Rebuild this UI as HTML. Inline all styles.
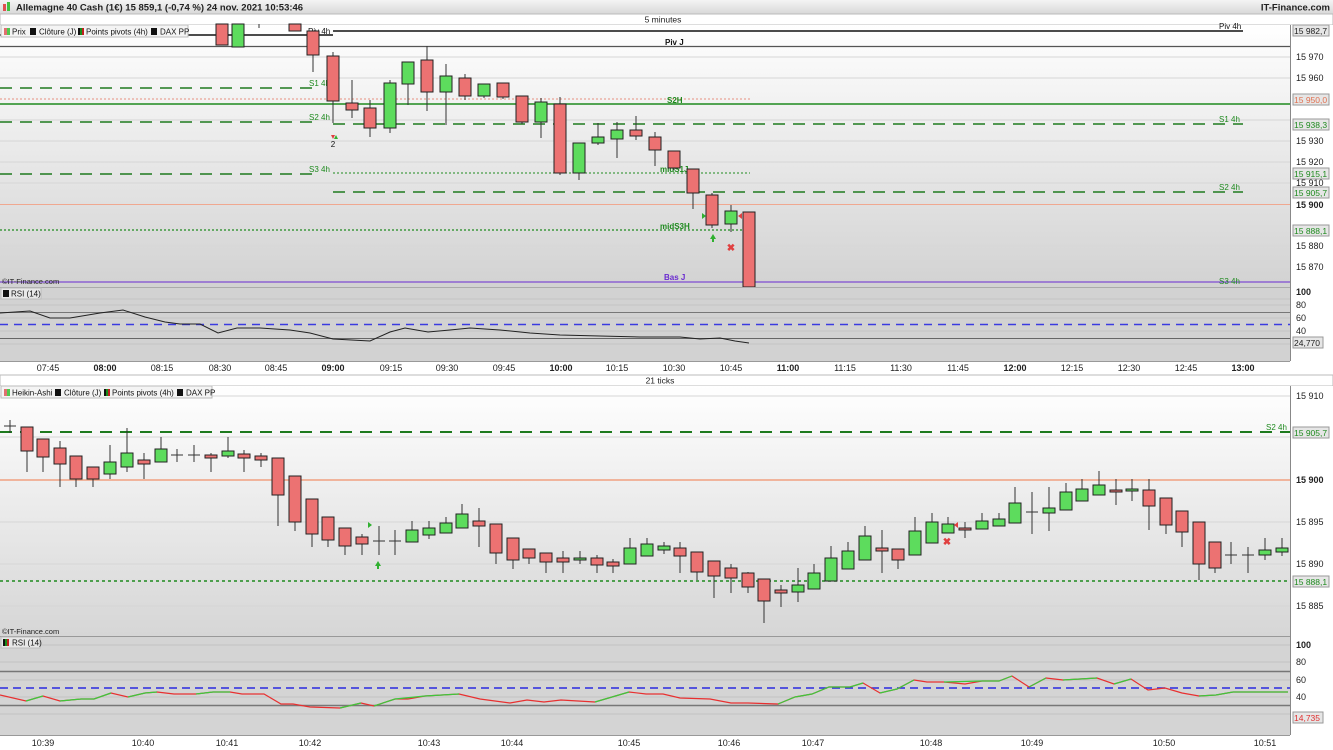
<!DOCTYPE html>
<html><head><meta charset="utf-8"><style>
html,body{margin:0;padding:0;width:1333px;height:750px;overflow:hidden;background:#fff;font-family:"Liberation Sans",sans-serif}
svg{display:block}
text{font-family:"Liberation Sans",sans-serif}
.r{fill:#ec7272;stroke:#222;stroke-width:1}
.g{fill:#5ddc5d;stroke:#222;stroke-width:1}
.w{stroke:#333;stroke-width:1}
.grid{stroke:#d6d6d6;stroke-width:1}
.ax{font-size:9px;fill:#222}
.lab{font-size:8px;fill:#1e8a1e}
</style></head><body>
<svg width="1333" height="750" viewBox="0 0 1333 750" xmlns="http://www.w3.org/2000/svg">
<defs>
<linearGradient id="tb" x1="0" y1="0" x2="0" y2="1"><stop offset="0" stop-color="#f4f4f4"/><stop offset="1" stop-color="#d8d8d8"/></linearGradient>
<linearGradient id="bg1" x1="0" y1="0" x2="0" y2="1"><stop offset="0" stop-color="#ffffff"/><stop offset="1" stop-color="#d2d2d2"/></linearGradient>
<linearGradient id="bg2" x1="0" y1="0" x2="0" y2="1"><stop offset="0" stop-color="#ffffff"/><stop offset="1" stop-color="#d6d6d6"/></linearGradient>
</defs>
<!-- title bar -->
<rect x="0" y="0" width="1333" height="14" fill="url(#tb)"/>
<rect x="3" y="4" width="3" height="7" fill="#e05050"/><rect x="7" y="2" width="3" height="9" fill="#40c040"/>
<text x="16" y="10.5" font-size="9.5" font-weight="bold" fill="#222">Allemagne 40 Cash (1€) 15 859,1 (-0,74 %) 24 nov. 2021 10:53:46</text>
<text x="1330" y="10.5" font-size="9.5" font-weight="bold" fill="#222" text-anchor="end">IT-Finance.com</text>
<rect x="0" y="14" width="1333" height="11" fill="#fff" stroke="#bbb"/>
<text x="663" y="22.5" font-size="8.5" fill="#222" text-anchor="middle">5 minutes</text>

<!-- top chart -->
<rect x="0" y="25" width="1290" height="262" fill="url(#bg1)"/>
<g class="grid">
<line x1="0" x2="1290" y1="57" y2="57"/><line x1="0" x2="1290" y1="78" y2="78"/><line x1="0" x2="1290" y1="120" y2="120"/><line x1="0" x2="1290" y1="141" y2="141"/><line x1="0" x2="1290" y1="162" y2="162"/><line x1="0" x2="1290" y1="183" y2="183"/><line x1="0" x2="1290" y1="246" y2="246"/><line x1="0" x2="1290" y1="267" y2="267"/>
</g>
<line x1="0" x2="1290" y1="46.5" y2="46.5" stroke="#555" stroke-width="1.2"/>
<line x1="0" x2="333" y1="35" y2="35" stroke="#111" stroke-width="1.5"/>
<line x1="333" x2="1243" y1="31" y2="31" stroke="#111" stroke-width="1.5"/>
<line x1="0" x2="750" y1="99" y2="99" stroke="#e89080" stroke-width="1" stroke-dasharray="2,2"/>
<line x1="0" x2="1290" y1="104" y2="104" stroke="#1e8a1e" stroke-width="1.5"/>
<line x1="0" x2="315" y1="88" y2="88" stroke="#1e7a1e" stroke-width="1.5" stroke-dasharray="12,8"/>
<line x1="0" x2="315" y1="122" y2="122" stroke="#1e7a1e" stroke-width="1.5" stroke-dasharray="12,8"/>
<line x1="0" x2="315" y1="174" y2="174" stroke="#1e7a1e" stroke-width="1.5" stroke-dasharray="12,8"/>
<line x1="333" x2="1243" y1="124" y2="124" stroke="#1e7a1e" stroke-width="1.5" stroke-dasharray="12,8"/>
<line x1="333" x2="1243" y1="192" y2="192" stroke="#1e7a1e" stroke-width="1.5" stroke-dasharray="12,8"/>
<line x1="333" x2="750" y1="173" y2="173" stroke="#1e8a1e" stroke-width="1" stroke-dasharray="2,2"/>
<line x1="0" x2="750" y1="230" y2="230" stroke="#1e8a1e" stroke-width="1.2" stroke-dasharray="2,2"/>
<line x1="0" x2="1290" y1="204.5" y2="204.5" stroke="#f0a890" stroke-width="1"/>
<line x1="0" x2="1290" y1="282" y2="282" stroke="#6a2ad0" stroke-width="1"/>
<text x="308" y="34" font-size="8" fill="#111">Piv 4h</text>
<text x="1219" y="29" font-size="8" fill="#111">Piv 4h</text>
<text x="665" y="45" font-size="8" font-weight="bold" fill="#111">Piv J</text>
<text x="309" y="86" class="lab">S1 4h</text>
<text x="309" y="120" class="lab">S2 4h</text>
<text x="309" y="172" class="lab">S3 4h</text>
<text x="1219" y="122" class="lab">S1 4h</text>
<text x="1219" y="190" class="lab">S2 4h</text>
<text x="1219" y="284" class="lab">S3 4h</text>
<text x="667" y="103" font-size="8" font-weight="bold" fill="#1e8a1e">S2H</text>
<text x="660" y="172" font-size="8" font-weight="bold" fill="#1e8a1e">midS1J</text>
<text x="660" y="229" font-size="8" font-weight="bold" fill="#1e8a1e">midS3H</text>
<text x="664" y="280" font-size="8" font-weight="bold" fill="#6a2ad0">Bas J</text>
<!-- top candles -->
<g>
<rect class="r" x="216" y="24" width="12" height="21"/>
<rect class="g" x="232" y="24" width="12" height="23"/>
<line class="w" x1="259" x2="259" y1="24" y2="28"/>
<rect class="r" x="289" y="24" width="12" height="7"/>
<line class="w" x1="313" x2="313" y1="31" y2="72"/><rect class="r" x="307" y="31" width="12" height="24"/>
<line class="w" x1="333" x2="333" y1="52" y2="123"/><rect class="r" x="327" y="56" width="12" height="45"/>
<line class="w" x1="352" x2="352" y1="80" y2="118"/><rect class="r" x="346" y="103" width="12" height="7"/>
<line class="w" x1="370" x2="370" y1="100" y2="137"/><rect class="r" x="364" y="108" width="12" height="20"/>
<line class="w" x1="390" x2="390" y1="80" y2="133"/><rect class="g" x="384" y="83" width="12" height="45"/>
<line class="w" x1="408" x2="408" y1="62" y2="105"/><rect class="g" x="402" y="62" width="12" height="22"/>
<line class="w" x1="427" x2="427" y1="46" y2="111"/><rect class="r" x="421" y="60" width="12" height="32"/>
<line class="w" x1="446" x2="446" y1="64" y2="125"/><rect class="g" x="440" y="76" width="12" height="16"/>
<line class="w" x1="465" x2="465" y1="74" y2="100"/><rect class="r" x="459" y="78" width="12" height="18"/>
<line class="w" x1="484" x2="484" y1="84" y2="98"/><rect class="g" x="478" y="84" width="12" height="12"/>
<line class="w" x1="503" x2="503" y1="83" y2="99"/><rect class="r" x="497" y="83" width="12" height="14"/>
<line class="w" x1="522" x2="522" y1="96" y2="124"/><rect class="r" x="516" y="96" width="12" height="26"/>
<line class="w" x1="541" x2="541" y1="98" y2="138"/><rect class="g" x="535" y="102" width="12" height="20"/>
<line class="w" x1="560" x2="560" y1="97" y2="175"/><rect class="r" x="554" y="104" width="12" height="69"/>
<line class="w" x1="579" x2="579" y1="143" y2="180"/><rect class="g" x="573" y="143" width="12" height="30"/>
<line class="w" x1="598" x2="598" y1="123" y2="145"/><rect class="g" x="592" y="137" width="12" height="6"/>
<line class="w" x1="617" x2="617" y1="122" y2="158"/><rect class="g" x="611" y="130" width="12" height="9"/>
<line class="w" x1="636" x2="636" y1="116" y2="140"/><rect class="r" x="630" y="130" width="12" height="6"/>
<line class="w" x1="655" x2="655" y1="132" y2="166"/><rect class="r" x="649" y="137" width="12" height="13"/>
<line class="w" x1="674" x2="674" y1="151" y2="170"/><rect class="r" x="668" y="151" width="12" height="17"/>
<line class="w" x1="693" x2="693" y1="169" y2="209"/><rect class="r" x="687" y="169" width="12" height="24"/>
<line class="w" x1="712" x2="712" y1="193" y2="228"/><rect class="r" x="706" y="195" width="12" height="30"/>
<line class="w" x1="731" x2="731" y1="205" y2="232"/><rect class="g" x="725" y="211" width="12" height="13"/>
<rect class="r" x="743" y="212" width="12" height="75"/>
</g>
<path d="M710 239 l3 -5 l3 5 h-2 v3 h-2 v-3z" fill="#30b030"/>
<text x="731" y="251" font-size="10" font-weight="bold" fill="#e04040" text-anchor="middle">✖</text>
<text x="333" y="147" font-size="8" fill="#111" text-anchor="middle">2</text>
<path d="M331 135 l2 4 l2 -4z" fill="#e04040"/><path d="M334 139 l2 -4 l2 4z" fill="#30b030"/>
<path d="M702 213 l4 3 l-4 3z" fill="#30b030"/><path d="M742 213 l-4 3 l4 3z" fill="#e04040"/>
<!-- legend top -->
<rect x="1" y="25" width="187" height="12" fill="#f4f4f4" stroke="#bbb"/>
<rect x="4" y="28" width="3" height="7" fill="#e07070"/><rect x="7" y="28" width="3" height="7" fill="#50c850"/>
<text x="12" y="34.5" font-size="8" fill="#111">Prix</text>
<rect x="30" y="28" width="6" height="7" fill="#111"/><text x="39" y="34.5" font-size="8" fill="#111">Clôture (J)</text>
<rect x="78" y="28" width="2" height="7" fill="#111"/><rect x="80" y="28" width="2" height="7" fill="#1a8a1a"/><rect x="82" y="28" width="2" height="7" fill="#c02020"/>
<text x="86" y="34.5" font-size="8" fill="#111">Points pivots (4h)</text>
<rect x="151" y="28" width="6" height="7" fill="#111"/><text x="160" y="34.5" font-size="8" fill="#111">DAX PP</text>
<text x="2" y="284" font-size="7.5" fill="#222">©IT-Finance.com</text>
<!-- top RSI -->
<rect x="0" y="287" width="1290" height="74" fill="#d2d2d2"/>
<line x1="0" x2="1290" y1="287.5" y2="287.5" stroke="#aaa"/>
<g stroke="#c4c4c4"><line x1="0" x2="1290" y1="299" y2="299"/><line x1="0" x2="1290" y1="305" y2="305"/><line x1="0" x2="1290" y1="318" y2="318"/><line x1="0" x2="1290" y1="331" y2="331"/><line x1="0" x2="1290" y1="344" y2="344"/></g>
<line x1="0" x2="1290" y1="312.5" y2="312.5" stroke="#777"/>
<line x1="0" x2="1290" y1="338.5" y2="338.5" stroke="#666"/>
<line x1="0" x2="1290" y1="324.5" y2="324.5" stroke="#3b3be0" stroke-width="1.5" stroke-dasharray="8,6"/>
<polyline fill="none" stroke="#222" stroke-width="1" points="0,313 30,311 50,318 70,318 100,313 123,310 145,317 165,322 180,324 200,324 218,333 237,328 260,328 290,330 310,333 333,339 370,341 390,332 405,328 428,332 450,330 470,328 500,330 530,333 560,335 600,336 640,337 680,337 700,339 720,338 735,341 749,343"/>
<rect x="1" y="288" width="40" height="11" fill="#e8e8e8" stroke="#bbb"/>
<rect x="3" y="290" width="6" height="7" fill="#111"/><text x="11" y="296.5" font-size="8" fill="#111">RSI (14)</text>
<!-- top right axis -->
<rect x="1290" y="25" width="43" height="336" fill="#fff"/>
<line x1="1290.5" x2="1290.5" y1="25" y2="361" stroke="#888"/>
<g class="ax">
<text x="1296" y="60">15 970</text><text x="1296" y="81">15 960</text><text x="1296" y="144">15 930</text><text x="1296" y="165">15 920</text><text x="1296" y="186">15 910</text><text x="1296" y="208" font-weight="bold">15 900</text><text x="1296" y="249">15 880</text><text x="1296" y="270">15 870</text>
<text x="1296" y="295" font-weight="bold">100</text><text x="1296" y="308">80</text><text x="1296" y="321">60</text><text x="1296" y="334">40</text>
</g>
<g font-size="8.5">
<rect x="1293" y="25" width="36" height="11" fill="#e6e6e6" stroke="#999"/><text x="1294" y="34" fill="#222">15 982,7</text>
<rect x="1293" y="94" width="36" height="11" fill="#e6e6e6" stroke="#999"/><text x="1294" y="103" fill="#e07050">15 950,0</text>
<rect x="1293" y="119" width="36" height="11" fill="#e6e6e6" stroke="#999"/><text x="1294" y="128" fill="#1e8a1e">15 938,3</text>
<rect x="1293" y="168" width="36" height="11" fill="#e6e6e6" stroke="#999"/><text x="1294" y="177" fill="#1e8a1e">15 915,1</text>
<rect x="1293" y="187" width="36" height="11" fill="#e6e6e6" stroke="#999"/><text x="1294" y="196" fill="#1e8a1e">15 905,7</text>
<rect x="1293" y="225" width="36" height="11" fill="#e6e6e6" stroke="#999"/><text x="1294" y="234" fill="#1e8a1e">15 888,1</text>
<rect x="1293" y="337" width="30" height="11" fill="#e6e6e6" stroke="#999"/><text x="1294" y="346" fill="#222">24,770</text>
</g>
<!-- top time axis -->
<rect x="0" y="361" width="1333" height="14" fill="#fff"/>
<line x1="0" x2="1290" y1="361.5" y2="361.5" stroke="#999"/>
<g class="ax" font-size="8.5" text-anchor="middle">
<text x="48" y="371">07:45</text><text x="105" y="371" font-weight="bold">08:00</text><text x="162" y="371">08:15</text><text x="220" y="371">08:30</text><text x="276" y="371">08:45</text><text x="333" y="371" font-weight="bold">09:00</text><text x="391" y="371">09:15</text><text x="447" y="371">09:30</text><text x="504" y="371">09:45</text><text x="561" y="371" font-weight="bold">10:00</text><text x="617" y="371">10:15</text><text x="674" y="371">10:30</text><text x="731" y="371">10:45</text><text x="788" y="371" font-weight="bold">11:00</text><text x="845" y="371">11:15</text><text x="901" y="371">11:30</text><text x="958" y="371">11:45</text><text x="1015" y="371" font-weight="bold">12:00</text><text x="1072" y="371">12:15</text><text x="1129" y="371">12:30</text><text x="1186" y="371">12:45</text><text x="1243" y="371" font-weight="bold">13:00</text>
</g>
<!-- 21 ticks bar -->
<rect x="0" y="375" width="1333" height="11" fill="#fff" stroke="#bbb"/>
<text x="660" y="383.5" font-size="8.5" fill="#222" text-anchor="middle">21 ticks</text>

<!-- bottom chart -->
<rect x="0" y="386" width="1290" height="250" fill="url(#bg2)"/>
<g class="grid"><line x1="0" x2="1290" y1="396" y2="396"/><line x1="0" x2="1290" y1="437" y2="437"/><line x1="0" x2="1290" y1="522" y2="522"/><line x1="0" x2="1290" y1="564" y2="564"/><line x1="0" x2="1290" y1="606" y2="606"/></g>
<line x1="0" x2="1290" y1="432" y2="432" stroke="#1e7a1e" stroke-width="2" stroke-dasharray="12,8"/>
<line x1="0" x2="1290" y1="480" y2="480" stroke="#f0a080" stroke-width="1.5"/>
<line x1="0" x2="1290" y1="581" y2="581" stroke="#1e8a1e" stroke-width="1.5" stroke-dasharray="3,3"/>
<text x="1266" y="430" class="lab">S2 4h</text>
<g>
<line class="w" x1="10" x2="10" y1="420" y2="433"/><line class="w" x1="4" x2="16" y1="426" y2="426"/>
<line class="w" x1="27" x2="27" y1="427" y2="472"/><rect class="r" x="21" y="427" width="12" height="24"/>
<line class="w" x1="43" x2="43" y1="439" y2="472"/><rect class="r" x="37" y="439" width="12" height="18"/>
<line class="w" x1="60" x2="60" y1="441" y2="487"/><rect class="r" x="54" y="448" width="12" height="16"/>
<line class="w" x1="76" x2="76" y1="456" y2="487"/><rect class="r" x="70" y="456" width="12" height="23"/>
<line class="w" x1="93" x2="93" y1="467" y2="487"/><rect class="r" x="87" y="467" width="12" height="12"/>
<line class="w" x1="110" x2="110" y1="445" y2="479"/><rect class="g" x="104" y="462" width="12" height="12"/>
<line class="w" x1="127" x2="127" y1="428" y2="472"/><rect class="g" x="121" y="453" width="12" height="14"/>
<line class="w" x1="144" x2="144" y1="453" y2="479"/><rect class="r" x="138" y="460" width="12" height="4"/>
<line class="w" x1="161" x2="161" y1="437" y2="462"/><rect class="g" x="155" y="449" width="12" height="13"/>
<line class="w" x1="177" x2="177" y1="449" y2="462"/><line class="w" x1="171" x2="183" y1="455" y2="455"/>
<line class="w" x1="194" x2="194" y1="445" y2="462"/><line class="w" x1="188" x2="200" y1="455" y2="455"/>
<line class="w" x1="211" x2="211" y1="453" y2="472"/><rect class="r" x="205" y="455" width="12" height="3"/>
<line class="w" x1="228" x2="228" y1="437" y2="458"/><rect class="g" x="222" y="451" width="12" height="5"/>
<line class="w" x1="244" x2="244" y1="450" y2="472"/><rect class="r" x="238" y="454" width="12" height="4"/>
<line class="w" x1="261" x2="261" y1="453" y2="467"/><rect class="r" x="255" y="456" width="12" height="4"/>
<line class="w" x1="278" x2="278" y1="458" y2="526"/><rect class="r" x="272" y="458" width="12" height="37"/>
<line class="w" x1="295" x2="295" y1="476" y2="531"/><rect class="r" x="289" y="476" width="12" height="46"/>
<line class="w" x1="312" x2="312" y1="499" y2="547"/><rect class="r" x="306" y="499" width="12" height="35"/>
<line class="w" x1="328" x2="328" y1="517" y2="547"/><rect class="r" x="322" y="517" width="12" height="23"/>
<line class="w" x1="345" x2="345" y1="528" y2="555"/><rect class="r" x="339" y="528" width="12" height="18"/>
<line class="w" x1="362" x2="362" y1="534" y2="555"/><rect class="r" x="356" y="537" width="12" height="7"/>
<line class="w" x1="379" x2="379" y1="526" y2="555"/><line class="w" x1="373" x2="385" y1="541" y2="541"/>
<line class="w" x1="395" x2="395" y1="530" y2="555"/><line class="w" x1="389" x2="401" y1="541" y2="541"/>
<line class="w" x1="412" x2="412" y1="521" y2="542"/><rect class="g" x="406" y="530" width="12" height="12"/>
<line class="w" x1="429" x2="429" y1="521" y2="539"/><rect class="g" x="423" y="528" width="12" height="7"/>
<line class="w" x1="446" x2="446" y1="517" y2="533"/><rect class="g" x="440" y="523" width="12" height="10"/>
<line class="w" x1="462" x2="462" y1="504" y2="528"/><rect class="g" x="456" y="514" width="12" height="14"/>
<line class="w" x1="479" x2="479" y1="508" y2="547"/><rect class="r" x="473" y="521" width="12" height="5"/>
<line class="w" x1="496" x2="496" y1="524" y2="564"/><rect class="r" x="490" y="524" width="12" height="29"/>
<line class="w" x1="513" x2="513" y1="538" y2="569"/><rect class="r" x="507" y="538" width="12" height="22"/>
<line class="w" x1="529" x2="529" y1="549" y2="564"/><rect class="r" x="523" y="549" width="12" height="9"/>
<line class="w" x1="546" x2="546" y1="553" y2="573"/><rect class="r" x="540" y="553" width="12" height="9"/>
<line class="w" x1="563" x2="563" y1="551" y2="573"/><rect class="r" x="557" y="558" width="12" height="4"/>
<line class="w" x1="580" x2="580" y1="551" y2="564"/><rect class="g" x="574" y="558" width="12" height="2"/>
<line class="w" x1="597" x2="597" y1="555" y2="573"/><rect class="r" x="591" y="558" width="12" height="7"/>
<line class="w" x1="613" x2="613" y1="559" y2="573"/><rect class="r" x="607" y="562" width="12" height="4"/>
<line class="w" x1="630" x2="630" y1="538" y2="564"/><rect class="g" x="624" y="548" width="12" height="16"/>
<line class="w" x1="647" x2="647" y1="538" y2="556"/><rect class="g" x="641" y="544" width="12" height="12"/>
<line class="w" x1="664" x2="664" y1="542" y2="554"/><rect class="g" x="658" y="546" width="12" height="4"/>
<line class="w" x1="680" x2="680" y1="542" y2="573"/><rect class="r" x="674" y="548" width="12" height="8"/>
<line class="w" x1="697" x2="697" y1="552" y2="580"/><rect class="r" x="691" y="552" width="12" height="20"/>
<line class="w" x1="714" x2="714" y1="561" y2="598"/><rect class="r" x="708" y="561" width="12" height="15"/>
<line class="w" x1="731" x2="731" y1="564" y2="593"/><rect class="r" x="725" y="568" width="12" height="10"/>
<line class="w" x1="748" x2="748" y1="572" y2="593"/><rect class="r" x="742" y="573" width="12" height="14"/>
<line class="w" x1="764" x2="764" y1="579" y2="623"/><rect class="r" x="758" y="579" width="12" height="22"/>
<line class="w" x1="781" x2="781" y1="585" y2="607"/><rect class="r" x="775" y="590" width="12" height="3"/>
<line class="w" x1="798" x2="798" y1="568" y2="602"/><rect class="g" x="792" y="585" width="12" height="7"/>
<line class="w" x1="814" x2="814" y1="564" y2="589"/><rect class="g" x="808" y="573" width="12" height="16"/>
<line class="w" x1="831" x2="831" y1="546" y2="581"/><rect class="g" x="825" y="558" width="12" height="23"/>
<line class="w" x1="848" x2="848" y1="542" y2="569"/><rect class="g" x="842" y="551" width="12" height="18"/>
<line class="w" x1="865" x2="865" y1="526" y2="560"/><rect class="g" x="859" y="536" width="12" height="24"/>
<line class="w" x1="882" x2="882" y1="530" y2="573"/><rect class="r" x="876" y="548" width="12" height="3"/>
<line class="w" x1="898" x2="898" y1="549" y2="569"/><rect class="r" x="892" y="549" width="12" height="11"/>
<line class="w" x1="915" x2="915" y1="517" y2="555"/><rect class="g" x="909" y="531" width="12" height="24"/>
<line class="w" x1="932" x2="932" y1="513" y2="543"/><rect class="g" x="926" y="522" width="12" height="21"/>
<line class="w" x1="948" x2="948" y1="517" y2="533"/><rect class="g" x="942" y="524" width="12" height="9"/>
<line class="w" x1="965" x2="965" y1="522" y2="538"/><rect class="r" x="959" y="528" width="12" height="2"/>
<line class="w" x1="982" x2="982" y1="513" y2="529"/><rect class="g" x="976" y="521" width="12" height="8"/>
<line class="w" x1="999" x2="999" y1="513" y2="526"/><rect class="g" x="993" y="519" width="12" height="7"/>
<line class="w" x1="1015" x2="1015" y1="487" y2="523"/><rect class="g" x="1009" y="503" width="12" height="20"/>
<line class="w" x1="1032" x2="1032" y1="492" y2="534"/><line class="w" x1="1026" x2="1038" y1="512" y2="512"/>
<line class="w" x1="1049" x2="1049" y1="487" y2="531"/><rect class="g" x="1043" y="508" width="12" height="5"/>
<line class="w" x1="1066" x2="1066" y1="483" y2="510"/><rect class="g" x="1060" y="492" width="12" height="18"/>
<line class="w" x1="1082" x2="1082" y1="479" y2="501"/><rect class="g" x="1076" y="489" width="12" height="12"/>
<line class="w" x1="1099" x2="1099" y1="471" y2="495"/><rect class="g" x="1093" y="485" width="12" height="10"/>
<line class="w" x1="1116" x2="1116" y1="479" y2="505"/><rect class="r" x="1110" y="490" width="12" height="2"/>
<line class="w" x1="1132" x2="1132" y1="479" y2="501"/><rect class="g" x="1126" y="489" width="12" height="2"/>
<line class="w" x1="1149" x2="1149" y1="479" y2="530"/><rect class="r" x="1143" y="490" width="12" height="16"/>
<line class="w" x1="1166" x2="1166" y1="498" y2="534"/><rect class="r" x="1160" y="498" width="12" height="27"/>
<line class="w" x1="1182" x2="1182" y1="511" y2="547"/><rect class="r" x="1176" y="511" width="12" height="21"/>
<line class="w" x1="1199" x2="1199" y1="522" y2="580"/><rect class="r" x="1193" y="522" width="12" height="42"/>
<line class="w" x1="1215" x2="1215" y1="542" y2="573"/><rect class="r" x="1209" y="542" width="12" height="26"/>
<line class="w" x1="1231" x2="1231" y1="542" y2="564"/><line class="w" x1="1225" x2="1237" y1="555" y2="555"/>
<line class="w" x1="1248" x2="1248" y1="547" y2="573"/><line class="w" x1="1242" x2="1254" y1="555" y2="555"/>
<line class="w" x1="1265" x2="1265" y1="538" y2="560"/><rect class="g" x="1259" y="550" width="12" height="5"/>
<line class="w" x1="1282" x2="1282" y1="538" y2="556"/><rect class="g" x="1276" y="548" width="12" height="4"/>
</g>
<path d="M375 566 l3 -5 l3 5 h-2 v3 h-2 v-3z" fill="#30b030"/>
<path d="M368 522 l4 3 l-4 3z" fill="#30b030"/><path d="M958 522 l-4 3 l4 3z" fill="#e04040"/>
<text x="947" y="545" font-size="10" font-weight="bold" fill="#e04040" text-anchor="middle">✖</text>
<!-- legend bottom -->
<rect x="1" y="386" width="211" height="12" fill="#f4f4f4" stroke="#bbb"/>
<rect x="4" y="389" width="3" height="7" fill="#e07070"/><rect x="7" y="389" width="3" height="7" fill="#50c850"/>
<text x="12" y="395.5" font-size="8" fill="#111">Heikin-Ashi</text>
<rect x="55" y="389" width="6" height="7" fill="#111"/><text x="64" y="395.5" font-size="8" fill="#111">Clôture (J)</text>
<rect x="104" y="389" width="2" height="7" fill="#111"/><rect x="106" y="389" width="2" height="7" fill="#1a8a1a"/><rect x="108" y="389" width="2" height="7" fill="#c02020"/>
<text x="112" y="395.5" font-size="8" fill="#111">Points pivots (4h)</text>
<rect x="177" y="389" width="6" height="7" fill="#111"/><text x="186" y="395.5" font-size="8" fill="#111">DAX PP</text>
<text x="2" y="634" font-size="7.5" fill="#222">©IT-Finance.com</text>
<!-- bottom RSI -->
<rect x="0" y="636" width="1290" height="99" fill="#d4d4d4"/>
<line x1="0" x2="1290" y1="636.5" y2="636.5" stroke="#999"/>
<g stroke="#c2c2c2"><line x1="0" x2="1290" y1="645" y2="645"/><line x1="0" x2="1290" y1="662" y2="662"/><line x1="0" x2="1290" y1="680" y2="680"/><line x1="0" x2="1290" y1="697" y2="697"/><line x1="0" x2="1290" y1="714" y2="714"/></g>
<line x1="0" x2="1290" y1="671.5" y2="671.5" stroke="#777" stroke-width="1.5"/>
<line x1="0" x2="1290" y1="705.5" y2="705.5" stroke="#777" stroke-width="1.5"/>
<line x1="0" x2="1290" y1="688" y2="688" stroke="#2a2ae0" stroke-width="1.5" stroke-dasharray="8,5"/>
<polyline fill="none" stroke="#e83030" stroke-width="1.2" points="0,695 26,701 43,696 60,701 81,699 94,699 111,693 128,697 145,693 157,692 174,694 196,694 213,692 230,692 242,694 264,694 281,704 293,704 310,707 340,708 361,703 374,706 395,699 408,699 425,696 459,694 480,699 510,703 527,700 544,702 561,700 595,702 629,692 646,694 663,694 680,698 710,699 731,703 748,703 778,704 795,697 812,694 829,687 850,687 863,683 880,693 897,689 914,680 927,682 944,682 965,684 982,681 999,681 1012,676 1029,687 1046,678 1063,680 1080,679 1097,678 1114,684 1131,679 1148,690 1165,688 1182,693 1199,696 1216,695 1233,692 1250,692 1267,692 1288,692"/>
<g fill="none" stroke="#3cc83c" stroke-width="1.2">
<polyline points="26,701 43,696"/><polyline points="60,701 81,699 94,699 111,693"/><polyline points="128,697 145,693 157,692"/><polyline points="196,694 213,692 230,692"/><polyline points="340,708 361,703"/><polyline points="374,706 395,699 425,696 459,694"/><polyline points="595,702 629,692"/>
<polyline points="778,704 795,697 812,694 829,687 850,687 863,683"/><polyline points="880,693 897,689 914,680"/><polyline points="944,682 982,681 999,681 1012,676"/><polyline points="1029,687 1046,678"/><polyline points="1063,680 1097,678"/><polyline points="1114,684 1131,679"/><polyline points="1199,696 1216,695 1233,692 1267,692 1288,692"/>
</g>
<rect x="1" y="637" width="39" height="11" fill="#e8e8e8" stroke="#bbb"/>
<rect x="3" y="639" width="2" height="7" fill="#111"/><rect x="5" y="639" width="2" height="7" fill="#1a8a1a"/><rect x="7" y="639" width="2" height="7" fill="#c02020"/>
<text x="12" y="645.5" font-size="8" fill="#111">RSI (14)</text>
<!-- bottom right axis -->
<rect x="1290" y="386" width="43" height="349" fill="#fff"/>
<line x1="1290.5" x2="1290.5" y1="386" y2="735" stroke="#888"/>
<g class="ax">
<text x="1296" y="399">15 910</text><text x="1296" y="483" font-weight="bold">15 900</text><text x="1296" y="525">15 895</text><text x="1296" y="567">15 890</text><text x="1296" y="609">15 885</text>
<text x="1296" y="648" font-weight="bold">100</text><text x="1296" y="665">80</text><text x="1296" y="683">60</text><text x="1296" y="700">40</text>
</g>
<g font-size="8.5">
<rect x="1293" y="427" width="36" height="11" fill="#e6e6e6" stroke="#999"/><text x="1294" y="436" fill="#1e8a1e">15 905,7</text>
<rect x="1293" y="576" width="36" height="11" fill="#e6e6e6" stroke="#999"/><text x="1294" y="585" fill="#1e8a1e">15 888,1</text>
<rect x="1293" y="712" width="30" height="11" fill="#e6e6e6" stroke="#999"/><text x="1294" y="721" fill="#e03030">14,735</text>
</g>
<!-- bottom time axis -->
<rect x="0" y="735" width="1333" height="15" fill="#fff"/>
<line x1="0" x2="1290" y1="735.5" y2="735.5" stroke="#999"/>
<g class="ax" font-size="8.5" text-anchor="middle">
<text x="43" y="746">10:39</text><text x="143" y="746">10:40</text><text x="227" y="746">10:41</text><text x="310" y="746">10:42</text><text x="429" y="746">10:43</text><text x="512" y="746">10:44</text><text x="629" y="746">10:45</text><text x="729" y="746">10:46</text><text x="813" y="746">10:47</text><text x="931" y="746">10:48</text><text x="1032" y="746">10:49</text><text x="1164" y="746">10:50</text><text x="1265" y="746">10:51</text>
</g>
</svg>
</body></html>
